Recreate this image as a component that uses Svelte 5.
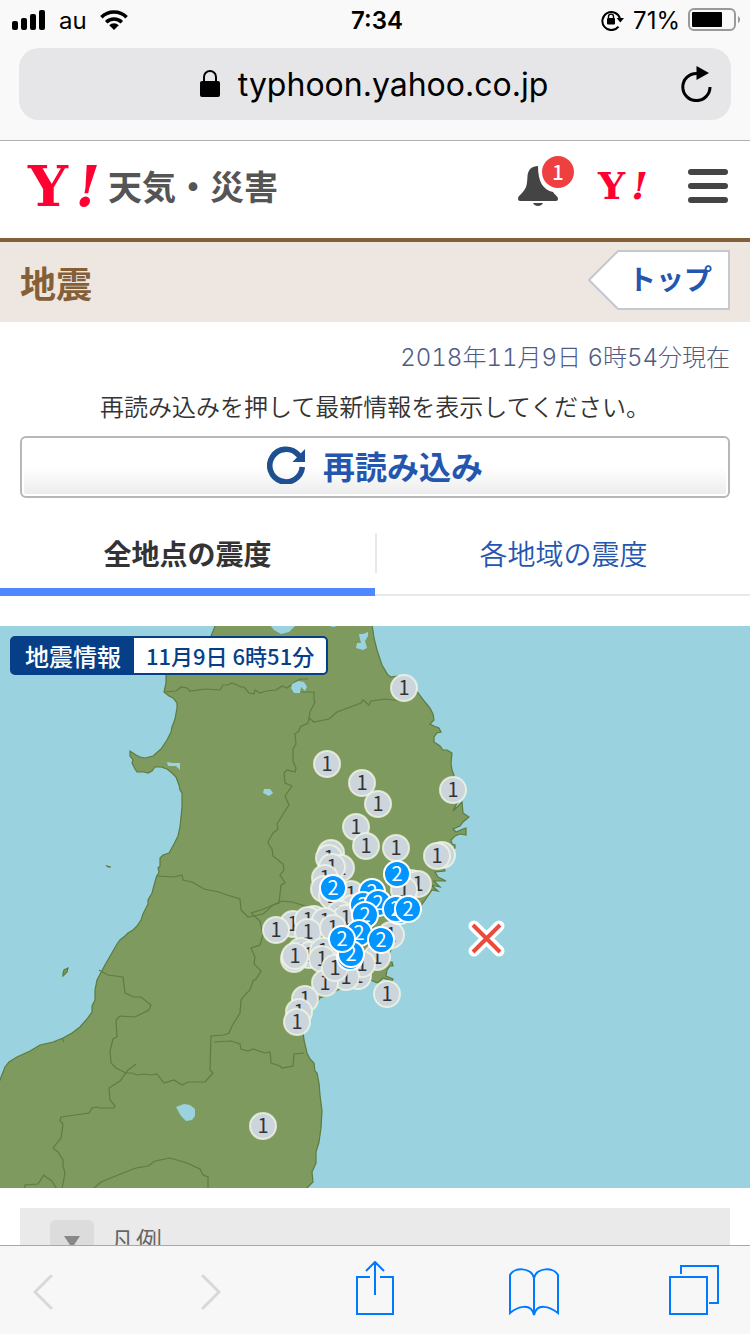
<script>
	let activeTab = $state('points');
	let legendOpen = $state(false);

	const tabs = [
		{ id: 'points', label: '全地点の震度' },
		{ id: 'areas', label: '各地域の震度' }
	];

	// x, y on the map
	const intensity1 = [
		[404, 688], [327, 764], [362, 783], [378, 804], [453, 790], [356, 827],
		[366, 846], [396, 848], [442, 855], [437, 856], [331, 853], [329, 858],
		[341, 868], [332, 867], [325, 878], [324, 889], [332, 896], [351, 894],
		[411, 883], [418, 884], [404, 890], [353, 908], [340, 914], [346, 918],
		[391, 935], [314, 919], [293, 924], [308, 920], [276, 930], [325, 921],
		[308, 932], [333, 928], [301, 951], [309, 955], [294, 959], [295, 956],
		[323, 951], [322, 959], [377, 957], [358, 976], [362, 964], [346, 977],
		[325, 983], [335, 968], [387, 994], [305, 999], [299, 1012], [297, 1022],
		[263, 1126]
	];

	const intensity2 = [
		[397, 874], [333, 888], [372, 892], [363, 905], [378, 903], [399, 911],
		[396, 909], [408, 909], [365, 915], [359, 933], [350, 957], [351, 954],
		[342, 939], [381, 940]
	];
</script>

<div class="screen">
	<div class="browser">
		<div class="status">
			<div class="left">
				<svg width="34" height="20" viewBox="0 0 34 20" aria-hidden="true">
					<rect x="0" y="11" width="6" height="9" rx="2" />
					<rect x="9" y="8" width="6" height="12" rx="2" />
					<rect x="18" y="4" width="6" height="16" rx="2" />
					<rect x="27" y="0" width="6" height="20" rx="2" />
				</svg>
				<span>au</span>
				<svg width="28" height="20" viewBox="0 0 28 20" aria-hidden="true">
					<g fill="none" stroke="#000" stroke-width="3.6">
						<path d="M1.4 7.2a18 18 0 0 1 25.2 0" />
						<path d="M6.2 12.2a11.2 11.2 0 0 1 15.6 0" />
					</g>
					<path d="M14 20l-4.8-4.7a6.8 6.8 0 0 1 9.6 0z" />
				</svg>
			</div>
			<time>7:34</time>
			<div class="right">
				<svg width="24" height="22" viewBox="0 0 24 22" aria-hidden="true">
					<path d="M17.5 17.6A9 9 0 1 1 19 9.5" fill="none" stroke="#000" stroke-width="2" />
					<path d="M15.6 9h7.4l-3.7 4.4z" />
					<rect x="6" y="9" width="8" height="6.6" rx="1" />
					<path d="M7.5 9.5V7.6a2.5 2.5 0 0 1 5 0v1.9" fill="none" stroke="#000" stroke-width="1.4" />
				</svg>
				<span>71%</span>
				<svg width="54" height="24" viewBox="0 0 54 24" aria-hidden="true">
					<rect x="1" y="1" width="46" height="21" rx="5" fill="none" stroke="#999" stroke-width="2" />
					<rect x="4" y="4" width="30" height="15" rx="1" />
					<path d="M50 8a4 4 0 0 1 0 7z" fill="#999" />
				</svg>
			</div>
		</div>
		<div class="address">
			<div class="url">
				<svg width="20" height="28" viewBox="0 0 20 28" aria-hidden="true">
					<rect x="0" y="11" width="20" height="16" rx="2" />
					<path d="M4 12V7a6 6 0 0 1 12 0v5" fill="none" stroke="#000" stroke-width="2" />
				</svg>
				<span>typhoon.yahoo.co.jp</span>
			</div>
			<button class="reload-page" aria-label="Reload">
				<svg width="32" height="36" viewBox="0 0 32 36">
					<path d="M29 21a13.6 13.6 0 1 1-13.6-13.6h3" fill="none" stroke="#000" stroke-width="3" />
					<path d="M15.5 0v14L28 7z" />
				</svg>
			</button>
		</div>
	</div>

	<div class="page">
		<header>
			<a class="brand" href="/" aria-label="Y!天気・災害">
				<span class="logo">Y<i>!</i></span>
				<span class="service">天気・災害</span>
			</a>
			<div class="tools">
				<button class="notice" aria-label="お知らせ">
					<svg width="40" height="40" viewBox="0 0 40 40" fill="#444">
						<path d="M20 0c-6 0-10 3.500-10.500 10C9 19.500 8.500 22 4 27 1.500 29.500 0 30.500 0 33c0 1 1 2 2 2h36c1 0 2-1 2-2 0-2.500-2.500-3.500-5-7C25 24 20 16 20 0z" />
						<path d="M15 37h10c-1.500 4-8.500 4-10 0z" />
					</svg>
					<span class="badge">1</span>
				</button>
				<a class="logo small" href="/yahoo" aria-label="Yahoo! JAPAN">Y<i>!</i></a>
				<button class="menu" aria-label="メニュー">
					<svg width="40" height="34" viewBox="0 0 40 34" fill="#444">
						<rect width="40" height="6" rx="3" />
						<rect y="14" width="40" height="6" rx="3" />
						<rect y="28" width="40" height="6" rx="3" />
					</svg>
				</button>
			</div>
		</header>

		<div class="title">
			<h1>地震</h1>
			<a class="top" href="/top">
				<svg width="30" height="60" viewBox="0 0 30 60">
					<path d="M30 1L1 30l29 29" fill="#fff" stroke="#c3c8d1" stroke-width="2" />
				</svg>
				<span>トップ</span>
			</a>
		</div>

		<div class="info">
			<p class="date">2018年11月9日 6時54分現在</p>
			<p>再読み込みを押して最新情報を表示してください。</p>
			<button class="reload">
				<svg width="38" height="38" viewBox="0 0 38 38" aria-hidden="true">
					<path d="M35.300 21A16.300 16.300 0 1 1 31 8.500L34 12" fill="none" stroke="#1d4f91" stroke-width="5.600" />
					<path d="M38 3v13H25.500z" fill="#1d4f91" />
				</svg>
				<span>再読み込み</span>
			</button>
		</div>

		<div class="tabs" role="tablist">
			{#each tabs as tab}
				<button
					role="tab"
					class:active={activeTab === tab.id}
					aria-selected={activeTab === tab.id}
					onclick={() => (activeTab = tab.id)}
				>
					<span>{tab.label}</span>
				</button>
			{/each}
		</div>

		<figure>
			<svg class="map" viewBox="0 626 750 562" role="img" aria-label="震度の分布図">
				<rect y="626" width="750" height="562" fill="#9ad3df" />
				<path
					class="land"
					d="M216 624L211 636 190 655 166 675 166 683 164 692 169 696 173 698 177 703 177 708 175 719 172 727 171 732 167 740 161 749 153 756 145 758 140 757 136 755 130 751 130 756 133 760 132 763 135 769 137 772 144 772 148 773 152 771 155 767 161 767 167 769 172 773 176 777 179 785 180 790 182 793 182 807 180 827 178 836 174 844 169 853 163 855 160 858 160 866 158 868 159 872 156 878 152 893 148 900 148 904 143 914 141 920 137 926 133 930 128 933 125 936 120 940 117 944 109 958 105 965 97 980 95 990 95 1000 92 1006 92 1012 87 1019 80 1027 72 1033 63 1038 53 1042 40 1045 30 1051 17 1057 9 1062 5 1067 0 1080-3 1085V1191H303L307 1188 313 1182 312 1172 316 1163 316 1152 319 1142 321 1128 322 1111 320 1095 319 1083 317 1073 315 1071 314 1063 310 1059 307 1053 304 1040 303 1032 308 1017 313 1008 320 998 328 995 338 990 343 988 353 983 370 980 378 983 383 978 392 981 393 979 386 976 387 970 390 966 393 966 392 962 387 962 390 952 393 943 397 927 407 918 420 907 430 893 432 890 438 891 431 885 440 887 434 881 446 881 438 877 435 872 445 871 444 867 450 860 450 852 455 848 455 845 452 844 451 840 455 836 460 834 466 835 466 828 463 829 456 832 453 829 460 826 463 822 469 817 463 813 462 802 453 811 457 803 454 800 454 775 452 770 451 763 452 753 447 750 443 750 440 746 434 742 434 737 437 733 441 732 439 728 434 726 430 724 434 720 433 714 430 708 425 702 418 693 404 678 397 676 391 677 388 675 382 665 377 650 374 638 372 624z"
				/>
				<path class="land" d="M68 968l-1 4-4 4v-3l1-3zM107 866l4 1h-3z" />
				<g class="border">
					<path d="M164 692l12-1 5-4 6 1 3 3 15-2 15 1 3-5 5 0 4-2 5 2 4 2h3l5 6 5 1 1-4 5 3 6-2 10-1 6-4 5 2 8-6 5-3h8M298 692h16v8l1 2-5 10-1 6-1 5-8 4-1 4-4 3 1 10-3 5v12l3 7-1 4-8-2-3 3 1 10 7 3-7 10 4 9-4 6-8 13 1 5-5 4-5 9 1 3 3 4 1 7 10 8 1 6-4 5 5 8-4 2-2 18-6 2-10 9-9 2-6 1-7-7-1-11-16-5-5-2-15-3-12-7-9-2-1-5-8 2-18-1" />
					<path d="M309 718l5 4 5-1 10-2 8-7 24-9 2-3 6 5 2-4 14-2 17 2" />
					<path d="M251 913l10-3 12-5 9-4 10 1 20 6" />
					<path d="M251 913l9 8 3 14-3 10-9 3 4 9-1 7 7 7-5 8-3 2-3 9-5 5-4 5-1 13-8 13-3 7-5 2-13 1-1 34 3 3-8 9-17 0-6 3-8-5-10 3-7-9-6 1-7-1-7 1-5-2-6 0-10-5-5-5-1-12 3-12 4-2-1-17 4-4 15 1 14-7 2-5-10-8-7 0-9-4-2-16-15-2-9-5" />
					<path d="M136 1064l-8 6-8 11-11 7 1 12 5 6-1 2h-14l-3-1-5 1-3 5-28 4-1 4 3 3-2 14-8 10 5 4 5 8v6l2 7-3 16-6-1-4-7-6-4-2-2-6 9-13 1-1 5" />
					<path d="M214 1042l17-1 9 3 1 5 7 2 5-2 12 4 5-1 1 11 9 3 2 2 11-2 1-12 10-1" />
					<path d="M94 1188l7-6 17-7 18-7 12-2 7-5 15-3 17 5 13 6 3 6 5 2v12M62 1038l2 4" />
				</g>
				<g fill="#9ad3df">
					<path d="M269 624l5 6 7 4 8-2 8-8zM328 624c3 4 8 4 10 0z" />
					<path d="M359 634l4 0 5-2v4l-3 5 2 7-4 2-7-2 1-5 4 0-1-4z" />
					<path d="M292 684l6-3 6 1 3 5-2 4-4-4-1 6-6 0-3-5z" />
					<path d="M167 762l6 1 7 0v7l-4-4-8 0z" />
					<path d="M264 789l6 0 3 4-4 3-6-3z" />
					<path d="M176 1107l8-3 6 1 5 4v7l-3 4-6 1-5-5z" />
				</g>
				{#each intensity1 as [x, y]}
					<circle class="one" cx={x} cy={y} r="13" />
					<text class="one-text" x={x} y={y + 7}>1</text>
				{/each}
				{#each intensity2 as [x, y]}
					<circle class="two" cx={x} cy={y} r="13" />
					<text class="two-text" x={x} y={y + 7}>2</text>
				{/each}
				<path d="M474 926l25 25m0-25l-25 25" stroke="#fff" stroke-width="11" stroke-linejoin="round" stroke-linecap="round" />
				<path d="M473 925l27 27m0-27l-27 27" stroke="#e94b3d" stroke-width="4" />
			</svg>
			<figcaption><b>地震情報</b><span>11月9日 6時51分</span></figcaption>
		</figure>

		<button class="legend" aria-expanded={legendOpen} onclick={() => (legendOpen = !legendOpen)}>
			<span class="arrow">
				<svg width="16" height="12" viewBox="0 0 16 12"><path d="M0 0h16L8 12z" fill="#888" /></svg>
			</span>
			<span>凡例</span>
		</button>
	</div>

	<nav>
		<button class="history" aria-label="Back" disabled>
			<svg width="20" height="40" viewBox="0 -4 20 40"><path d="M18 2L2 18l16 16" /></svg>
		</button>
		<button class="history" aria-label="Forward" disabled>
			<svg width="20" height="40" viewBox="0 -4 20 40"><path d="M2 2l16 16L2 34" /></svg>
		</button>
		<button aria-label="Share">
			<svg width="38" height="58" viewBox="0 0 38 58">
				<path d="M14 16H1v37h36V16H24M19 34V2M10 10l9-9 9 9" />
			</svg>
		</button>
		<button aria-label="Bookmarks">
			<svg width="50" height="52" viewBox="0 -4 50 52">
				<path d="M25 47V10C22-1 5-1 1 7v38c7-6 21-11 24 2C28 34 41 39 49 45V7C45-1 28-1 25 10" />
			</svg>
		</button>
		<button aria-label="Tabs">
			<svg width="50" height="50" viewBox="0 0 50 50">
				<path d="M1 12h37v37H1zM12 9V1h37v37h-9" />
			</svg>
		</button>
	</nav>
</div>

<style>
	:global(body) {
		margin: 0;
		background: #fff;
	}

	.screen {
		display: flex;
		flex-direction: column;
		height: 100vh;
		overflow: hidden;
		color: #333;
		font-family: 'Noto Sans CJK JP', sans-serif;
	}

	svg {
		display: block;
		flex-shrink: 0;
	}

	button {
		padding: 0;
		border: none;
		background: none;
		color: inherit;
		font: inherit;
		cursor: pointer;
	}

	a {
		text-decoration: none;
	}

	/* browser bars */
	.browser {
		flex-shrink: 0;
		padding-bottom: 20px;
		border-bottom: 1px solid #b0b0b2;
		background: #f9f9f9;
		color: #000;
		font-family: Inter, 'Liberation Sans', sans-serif;
	}

	.status {
		display: grid;
		grid-template-columns: 1fr auto 1fr;
		align-items: center;
		height: 40px;
		margin-bottom: 8px;
		padding: 0 8px 0 12px;
		font-size: 24px;
	}

	.status time {
		font-weight: 600;
	}

	.status .left,
	.status .right {
		display: flex;
		align-items: center;
		gap: 13px;
	}

	.status .right {
		justify-content: flex-end;
		gap: 8px;
	}

	.address {
		display: flex;
		align-items: center;
		height: 72px;
		margin: 0 19px;
		padding: 0 18px;
		border-radius: 20px;
		background: #e6e6e8;
	}

	.url {
		flex: 1;
		display: flex;
		align-items: center;
		justify-content: center;
		gap: 18px;
		padding-left: 30px;
		font-size: 32px;
	}

	/* site header */
	.page {
		flex: 1;
		min-height: 0;
		overflow: hidden;
	}

	header {
		display: flex;
		align-items: center;
		justify-content: space-between;
		height: 97px;
		padding: 0 22px 0 28px;
		border-bottom: 4px solid #855f37;
	}

	.brand,
	.tools {
		display: flex;
		align-items: center;
		padding-bottom: 8px;
	}

	.logo {
		display: flex;
		justify-content: space-between;
		width: 72px;
		margin-right: 8px;
		color: #ff0033;
		font: bold 56px/56px 'DejaVu Serif', 'Liberation Serif', serif;
	}

	.logo.small {
		width: 50px;
		margin: 0;
		font-size: 38px;
	}

	.service {
		color: #555;
		font-size: 34px;
		font-weight: bold;
		line-height: 48px;
	}

	.tools {
		gap: 40px;
	}

	.notice {
		position: relative;
	}

	.badge {
		position: absolute;
		top: -12px;
		right: -18px;
		width: 32px;
		border: 2px solid #fff;
		border-radius: 50%;
		background: #ee4040;
		color: #fff;
		font-size: 20px;
		font-weight: 500;
		line-height: 32px;
		text-align: center;
	}

	/* page title */
	.title {
		display: flex;
		align-items: center;
		justify-content: space-between;
		height: 80px;
		padding: 0 20px;
		background: #eee6e0;
	}

	h1 {
		margin: 0;
		color: #855f37;
		font-size: 36px;
		line-height: 48px;
	}

	.top {
		display: flex;
		margin-bottom: 4px;
		color: #2456b0;
		font-size: 28px;
		font-weight: bold;
		line-height: 52px;
	}

	.top span {
		padding: 0 16px 4px 10px;
		border: 2px solid #c3c8d1;
		border-left: none;
		background: #fff;
	}

	/* update time and reload */
	.info {
		padding: 12px 20px 0;
		font-size: 24px;
		font-weight: 350;
		line-height: 48px;
		text-align: center;
	}

	.info p {
		margin: 0;
	}

	.info .date {
		color: #4f5c84;
		font-family: Inter, 'Noto Sans CJK JP', sans-serif;
		font-variant-numeric: tabular-nums;
		font-weight: 300;
		text-align: right;
	}

	.reload {
		display: flex;
		align-items: center;
		justify-content: center;
		gap: 18px;
		width: 100%;
		height: 62px;
		margin-top: 6px;
		padding-bottom: 4px;
		border: 2px solid #b7b7b7;
		border-radius: 6px;
		background: linear-gradient(#fff 50%, #ebebeb);
		box-shadow: inset 0 0 0 2px #fff;
		color: #2456b0;
		font-size: 32px;
		font-weight: bold;
	}

	/* tabs */
	.tabs {
		display: flex;
		margin: 14px 0 30px;
	}

	.tabs button {
		flex: 1;
		height: 84px;
		box-sizing: border-box;
		border-bottom: 2px solid #e8e8e8;
		color: #2456b0;
		font-size: 28px;
		font-weight: 350;
	}

	.tabs button.active {
		padding-top: 6px;
		border-bottom: 8px solid #5088ff;
		color: #333;
		font-weight: bold;
	}

	.tabs span {
		display: block;
		line-height: 40px;
	}

	.tabs button + button span {
		border-left: 2px solid #e8e8e8;
	}

	/* map */
	figure {
		position: relative;
		margin: 0 0 20px;
	}

	.map {
		width: 100%;
		font-size: 20px;
		font-weight: 400;
		text-anchor: middle;
	}

	.land {
		fill: #7e9a5e;
		stroke: #5c7b3e;
		stroke-width: 1.2;
	}

	.border {
		fill: none;
		stroke: #5f7c43;
		stroke-width: 1.2;
	}

	.one {
		fill: #cbd5db;
		stroke: #f1f5e5;
		stroke-opacity: 0.8;
		stroke-width: 2;
	}

	.one-text {
		fill: #333;
	}

	.two {
		fill: #0095ff;
		stroke: #fff;
		stroke-width: 2;
	}

	.two-text {
		fill: #fff;
	}

	figcaption {
		position: absolute;
		top: 10px;
		left: 10px;
		display: flex;
		border: 2px solid #063f88;
		border-radius: 5px;
		background: #063f88;
		color: #fff;
		font-size: 24px;
		line-height: 35px;
	}

	figcaption b {
		padding: 0 13px;
		font-weight: 500;
	}

	figcaption span {
		padding: 0 12px;
		border-radius: 0 3px 3px 0;
		background: #fff;
		color: #063f88;
		font-size: 22px;
		font-weight: 500;
	}

	/* legend */
	.legend {
		display: flex;
		align-items: flex-start;
		gap: 16px;
		width: calc(100% - 40px);
		margin: 0 20px;
		padding: 12px 30px;
		background: #eaeaea;
		color: #666;
		font-size: 26px;
		font-weight: 350;
		line-height: 40px;
	}

	.arrow {
		display: flex;
		align-items: center;
		justify-content: center;
		width: 44px;
		height: 44px;
		border-radius: 6px;
		background: #dcdcdc;
	}

	/* bottom toolbar */
	nav {
		display: flex;
		align-items: center;
		justify-content: space-between;
		flex-shrink: 0;
		height: 88px;
		padding: 0 30px 0 13px;
		border-top: 1px solid #a8a8a8;
		background: #f7f7f7;
	}

	nav button {
		display: flex;
		justify-content: center;
		width: 52px;
	}

	nav .history {
		width: 60px;
	}

	nav path {
		fill: none;
		stroke: #007aff;
		stroke-width: 2;
	}

	nav .history path {
		stroke: #d8d8d8;
		stroke-width: 3;
		stroke-linecap: round;
	}
</style>
